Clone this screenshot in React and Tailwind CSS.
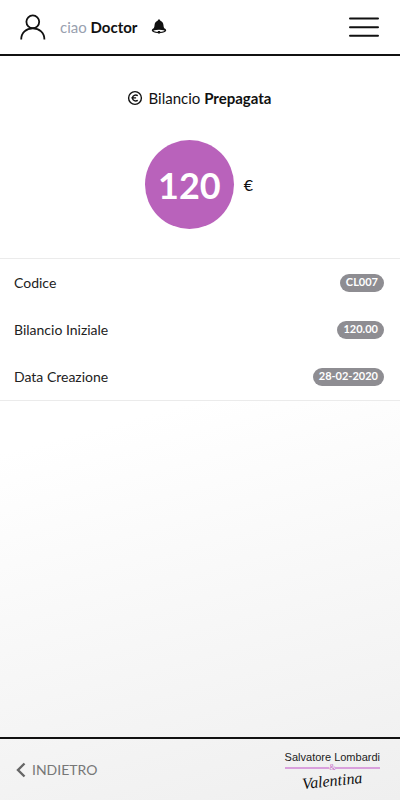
const DETAILS = [
  { label: "Codice", value: "CL007" },
  { label: "Bilancio Iniziale", value: "120.00" },
  { label: "Data Creazione", value: "28-02-2020" },
];

const UserIcon = () => (
  <svg width="26" height="26" viewBox="0 0 26 26" fill="none" stroke="#111" strokeWidth="1.8">
    <circle cx="12.8" cy="7.8" r="6.400" />
    <path d="M1.200 25.500C1.200 18.800 6.200 14.300 12.800 14.300s11.600 4.500 11.600 11.200" />
  </svg>
);

const BellIcon = () => (
  <svg width="16" height="16" viewBox="0 0 16 16" fill="#111">
    <path d="M8 .6c.8 0 1.300.5 1.300 1.200 2.200.6 3 2.500 3.200 4.700.1 2 .7 2.900 1.700 3.700H1.800c1-.8 1.600-1.700 1.700-3.700.2-2.200 1-4.100 3.200-4.700C6.700 1.100 7.200.6 8 .6Z" />
    <path d="M1.800 9.800C.6 10.600.5 11.800 1.500 12.600 3 13.900 5.500 14.300 8 14.300s5-.4 6.500-1.700c1-.8.9-2-.3-2.800Z" />
    <path d="M2.300 11.600c3.600-1.200 7.800-1.200 11.400 0-1.200 1-2.600 1.300-4.200 1.400a1.600 1.600 0 0 0-3 0c-1.600-.1-3-.4-4.200-1.400Z" fill="#fff" />
    <circle cx="8" cy="13.200" r="1.300" />
  </svg>
);

const MenuIcon = () => (
  <svg width="32" height="22" viewBox="0 0 32 22" stroke="#111" strokeWidth="2" strokeLinecap="round">
    <path d="M2 2.500h28M2 11.200h28M2 19.800h28" />
  </svg>
);

// Moneta: una "c" barrata dentro un cerchio
const CoinIcon = () => (
  <svg width="16" height="16" viewBox="0 0 16 16" fill="none" stroke="#111" strokeWidth="1.400">
    <circle cx="8" cy="8" r="6.400" />
    <path d="M10.800 5.600C8.500 4.300 5.500 5.300 5.500 8s3 3.700 5.300 2.400M4.300 7.900h4.800" />
  </svg>
);

const BackIcon = () => (
  <svg width="10" height="16" viewBox="0 0 10 16" fill="none" stroke="#666" strokeWidth="2.400">
    <path d="M8.500 1.500 2 8l6.500 6.500" />
  </svg>
);

const Header = () => (
  <header className="flex h-14 items-center justify-between border-b-2 border-[#111] bg-white px-5">
    <div className="flex items-center">
      <UserIcon />
      <p className="ml-[14px] text-[15px] text-gray-400">
        ciao <strong className="font-bold text-[#111]">Doctor</strong>
      </p>
      <button type="button" aria-label="Notifiche" className="ml-[14px]">
        <BellIcon />
      </button>
    </div>
    <button type="button" aria-label="Menu">
      <MenuIcon />
    </button>
  </header>
);

const Balance = () => (
  <section className="flex flex-col items-center bg-white pt-8 pr-[2px] pb-[29px]">
    <h1 className="flex items-center gap-[6px] text-[15px] leading-5 text-[#111]">
      <CoinIcon />
      <span>
        Bilancio <strong className="font-bold">Prepagata</strong>
      </span>
    </h1>
    <div className="mt-8 flex items-center gap-[10px]">
      <div className="flex size-[89px] items-center justify-center rounded-full bg-[#b962bb] text-4xl font-bold text-white">
        120
      </div>
      <span className="text-base text-[#111]">€</span>
    </div>
  </section>
);

const Details = () => (
  <dl className="border-y border-[#ebebeb] bg-white">
    {DETAILS.map(({ label, value }) => (
      <div key={label} className="flex h-[47px] items-center justify-between pr-4 pl-[14px]">
        <dt className="text-[14px] text-[#222]">{label}</dt>
        <dd className="h-[18px] rounded-full bg-[#8e8d92] px-[6px] text-[11px] leading-4 font-bold text-white">
          {value}
        </dd>
      </div>
    ))}
  </dl>
);

const Logo = () => (
  <a href="#" className="flex flex-col items-center text-[#222]">
    <span className="font-['Liberation_Sans',sans-serif] text-[11px] leading-3">
      Salvatore Lombardi
    </span>
    <span className="flex w-full items-center font-['Liberation_Serif',serif] text-[8px] leading-[10px] text-[#c565c7]">
      <span className="h-[2px] flex-1 bg-[#d9a0dc]" />
      &amp;
      <span className="h-[2px] flex-1 bg-[#d9a0dc]" />
    </span>
    <span className="-rotate-6 font-['Liberation_Serif',serif] text-base leading-4 text-[#111] italic">
      Valentina
    </span>
  </a>
);

const Footer = () => (
  <footer className="flex h-[63px] items-center justify-between border-t-2 border-[#111] pr-5 pl-4">
    <button type="button" className="flex items-center gap-[6px] text-[14px] text-[#777]">
      <BackIcon />
      INDIETRO
    </button>
    <Logo />
  </footer>
);

const App = () => {
  return (
    <div className="flex min-h-screen flex-col bg-linear-165 from-white from-50% to-[#efefef] font-['Lato',sans-serif]">
      <Header />
      <main className="flex-1">
        <Balance />
        <Details />
      </main>
      <Footer />
    </div>
  );
};

export default App;
